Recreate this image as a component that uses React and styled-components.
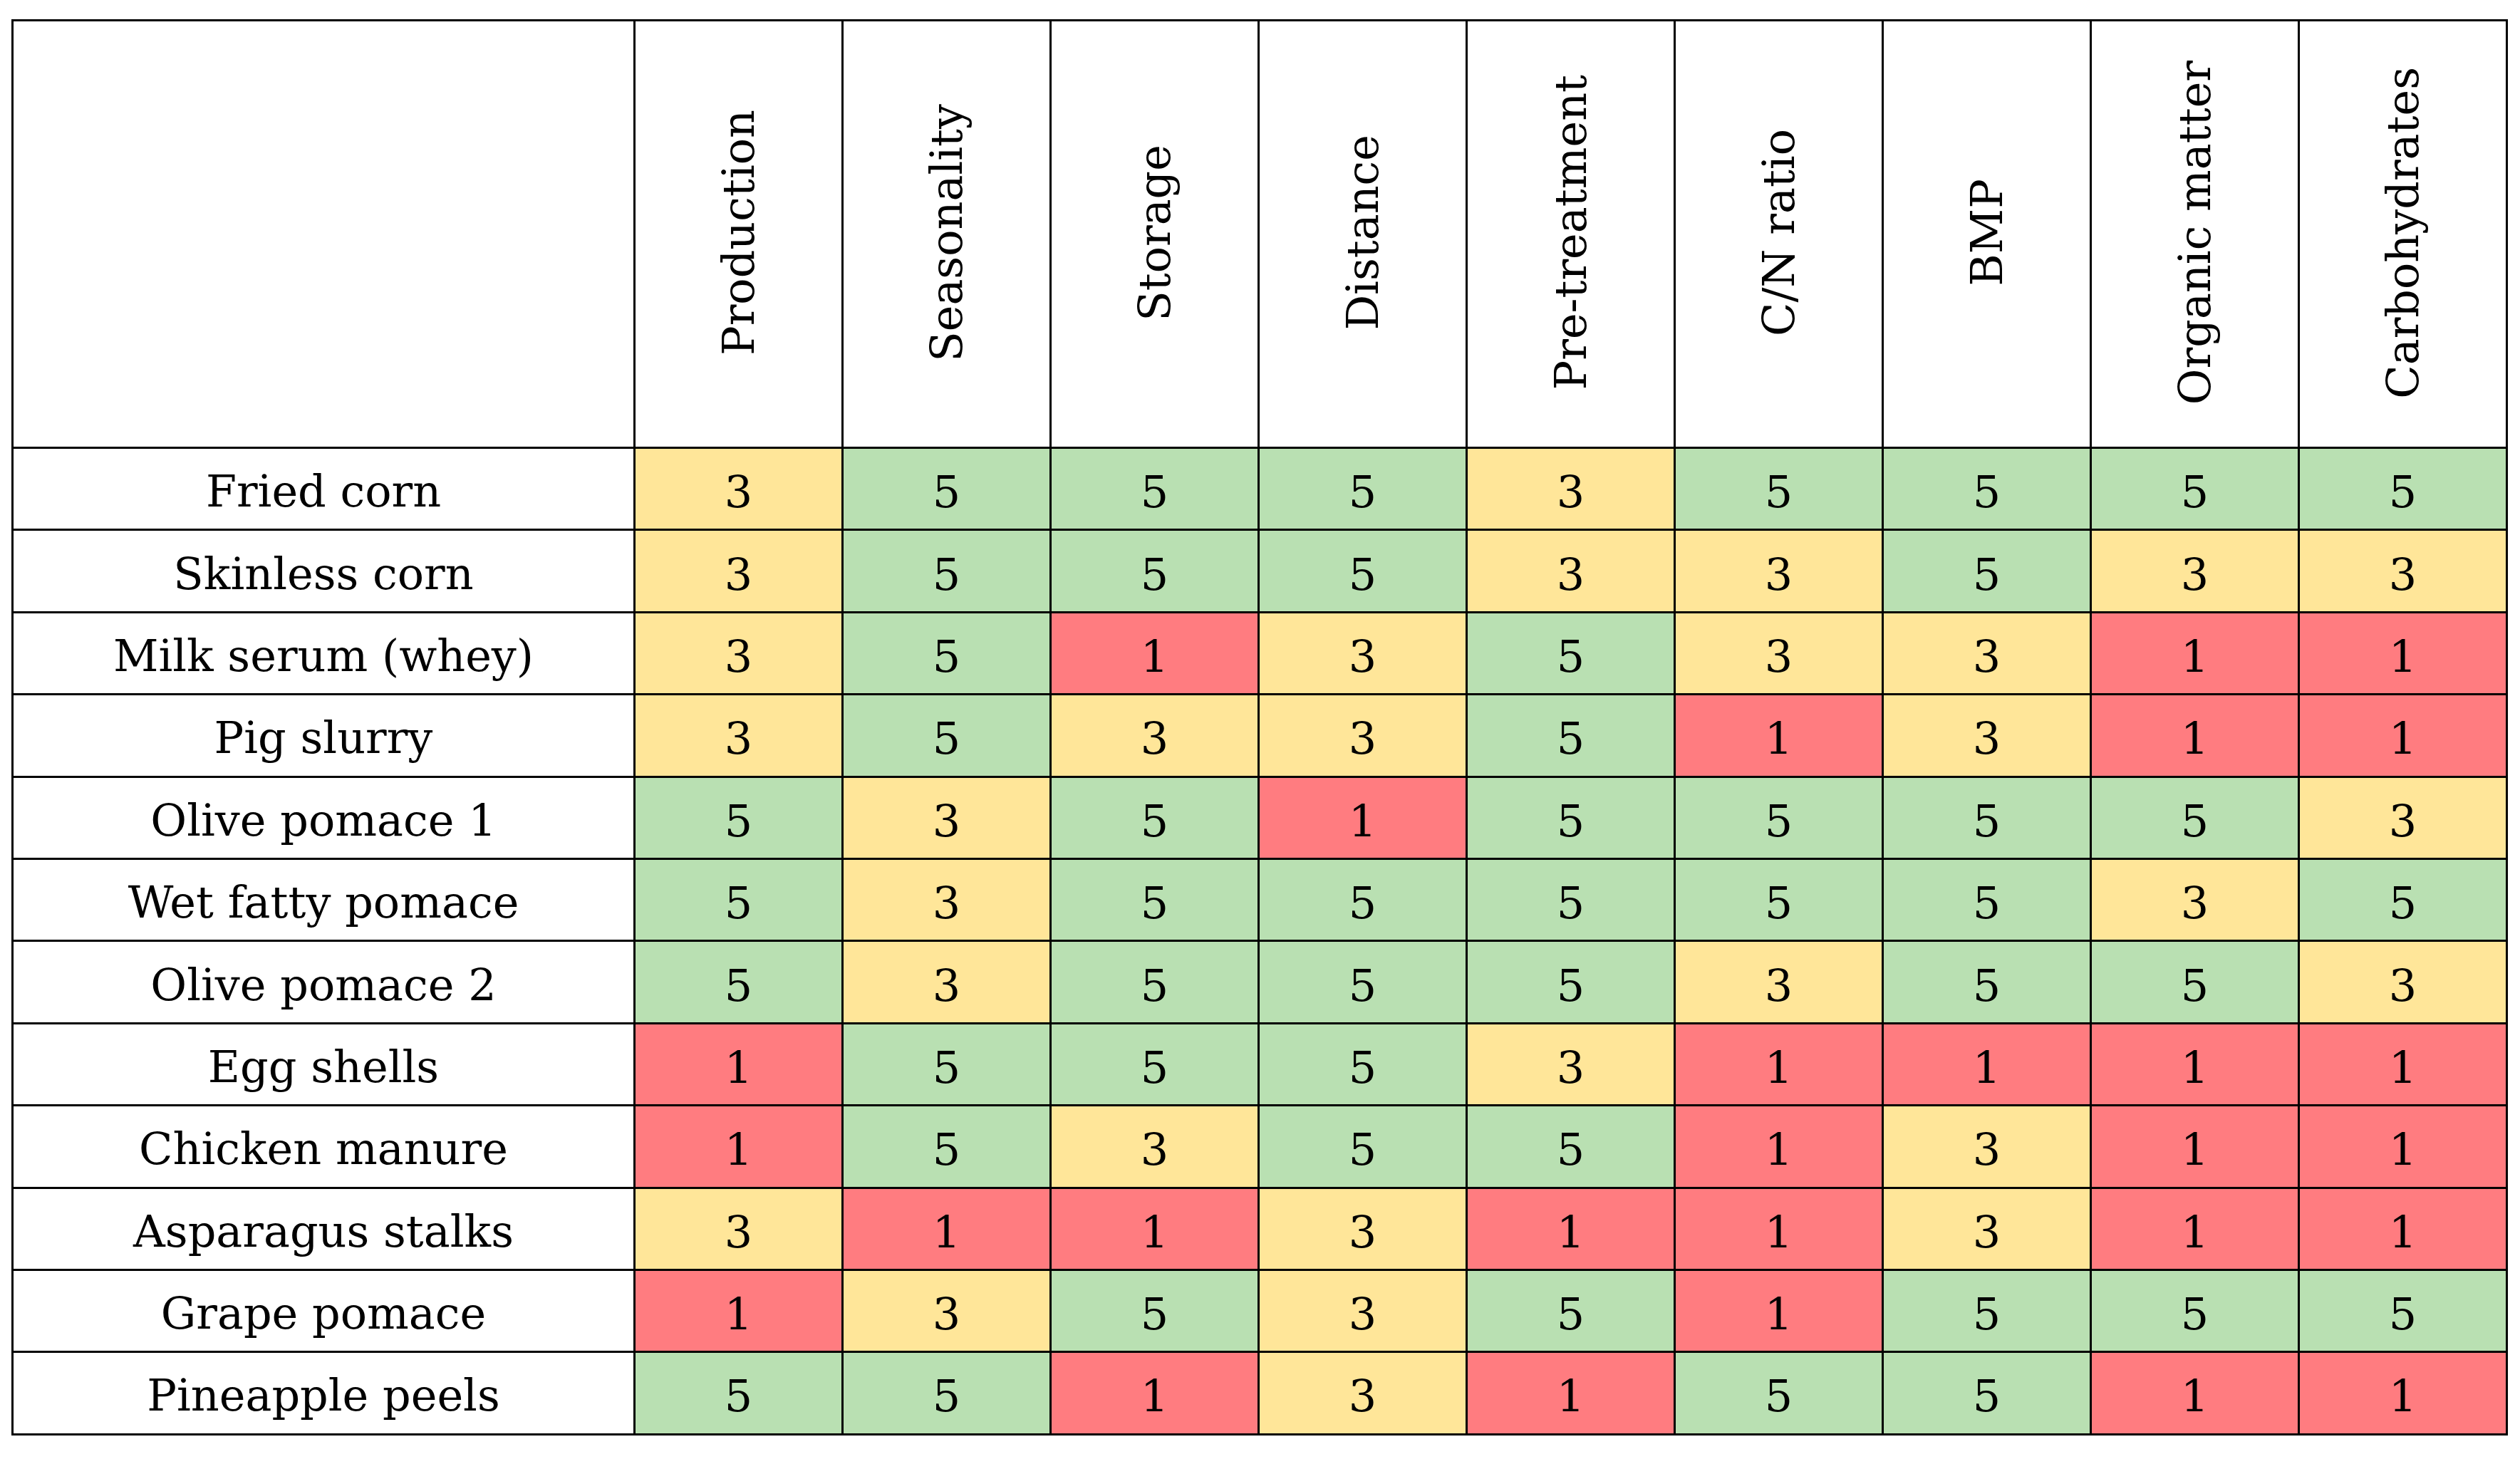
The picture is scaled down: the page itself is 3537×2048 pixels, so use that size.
import React from "react";
import styled, { createGlobalStyle } from "styled-components";

const GlobalStyle = createGlobalStyle`
  html, body {
    margin: 0;
    padding: 0;
    background: #ffffff;
  }
`;

const Page = styled.div`
  padding: 27px 0 0 16px;
  font-family: "DejaVu Serif", "Liberation Serif", serif;
  color: #000000;
`;

const Table = styled.table`
  border-collapse: collapse;
  table-layout: fixed;
  width: 3501px;
`;

const HeadCell = styled.th`
  height: 597px;
  border: 3px solid #000;
  padding: 0;
  font-weight: 400;
  background: #ffffff;
  text-align: center;
  vertical-align: middle;
`;

const Rotated = styled.span`
  display: inline-block;
  writing-mode: vertical-rl;
  transform: rotate(180deg);
  font-size: 62px;
  line-height: 1;
  white-space: nowrap;
`;

const LabelCell = styled.td`
  height: 104.4px;
  border: 3px solid #000;
  padding: 8px 0 0;
  text-align: center;
  vertical-align: middle;
  font-size: 62px;
  line-height: 1;
  white-space: nowrap;
`;

const scoreColors = {
  1: "#ff7c80",
  3: "#ffe699",
  5: "#b9e0b2",
};

const ScoreCell = styled.td`
  border: 3px solid #000;
  padding: 10px 0 0;
  text-align: center;
  vertical-align: middle;
  font-size: 62px;
  line-height: 1;
  background: ${(props) => scoreColors[props.$score]};
`;

const criteria = [
  "Production",
  "Seasonality",
  "Storage",
  "Distance",
  "Pre-treatment",
  "C/N ratio",
  "BMP",
  "Organic matter",
  "Carbohydrates",
];

const rows = [
  ["Fried corn", [3, 5, 5, 5, 3, 5, 5, 5, 5]],
  ["Skinless corn", [3, 5, 5, 5, 3, 3, 5, 3, 3]],
  ["Milk serum (whey)", [3, 5, 1, 3, 5, 3, 3, 1, 1]],
  ["Pig slurry", [3, 5, 3, 3, 5, 1, 3, 1, 1]],
  ["Olive pomace 1", [5, 3, 5, 1, 5, 5, 5, 5, 3]],
  ["Wet fatty pomace", [5, 3, 5, 5, 5, 5, 5, 3, 5]],
  ["Olive pomace 2", [5, 3, 5, 5, 5, 3, 5, 5, 3]],
  ["Egg shells", [1, 5, 5, 5, 3, 1, 1, 1, 1]],
  ["Chicken manure", [1, 5, 3, 5, 5, 1, 3, 1, 1]],
  ["Asparagus stalks", [3, 1, 1, 3, 1, 1, 3, 1, 1]],
  ["Grape pomace", [1, 3, 5, 3, 5, 1, 5, 5, 5]],
  ["Pineapple peels", [5, 5, 1, 3, 1, 5, 5, 1, 1]],
];

const App = () => {
  return (
    <Page>
      <GlobalStyle />
      <Table>
        <colgroup>
          <col style={{ width: 873 }} />
          {criteria.map((c) => (
            <col key={c} style={{ width: 292 }} />
          ))}
        </colgroup>
        <thead>
          <tr>
            <HeadCell />
            {criteria.map((c) => (
              <HeadCell key={c}>
                <Rotated>{c}</Rotated>
              </HeadCell>
            ))}
          </tr>
        </thead>
        <tbody>
          {rows.map(([name, scores]) => (
            <tr key={name}>
              <LabelCell>{name}</LabelCell>
              {scores.map((s, i) => (
                <ScoreCell key={i} $score={s}>
                  {s}
                </ScoreCell>
              ))}
            </tr>
          ))}
        </tbody>
      </Table>
    </Page>
  );
};

export default App;
